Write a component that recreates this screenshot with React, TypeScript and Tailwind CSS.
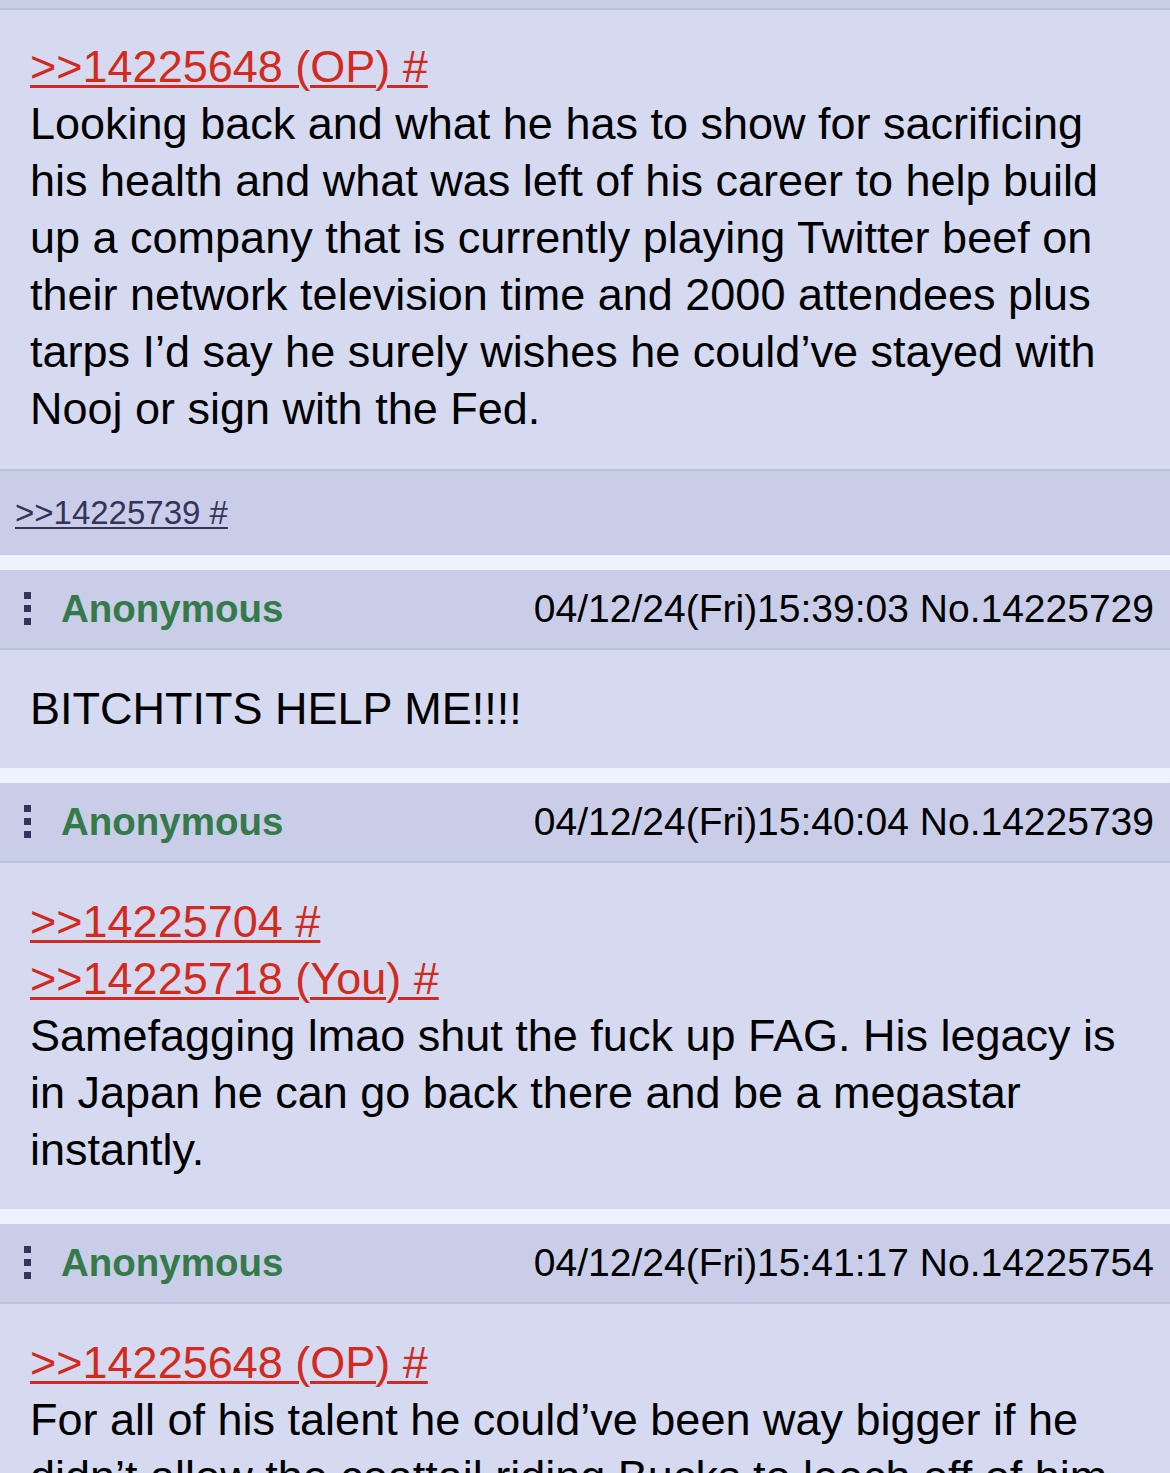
import React from 'react'

const font = { fontFamily: '"Liberation Sans", Arial, Helvetica, sans-serif' }

function Dots() {
  return (
    <svg width="8" height="34" viewBox="0 0 8 34" className="shrink-0">
      <rect x="0" y="0" width="7" height="7" fill="#34345c" />
      <rect x="0" y="13" width="7" height="7" fill="#34345c" />
      <rect x="0" y="26" width="7" height="7" fill="#34345c" />
    </svg>
  )
}

function PostHeader({ date, no }: { date: string; no: string }) {
  return (
    <div className="flex items-center h-[80px] bg-[#c9cde8] border-b-2 border-[#b7c5d9] pl-[24px] pr-[16px]">
      <Dots />
      <span className="ml-[29px] text-[38.5px] font-bold text-[#357a4a]">Anonymous</span>
      <span className="ml-auto text-[39px] text-black">
        {date} No.{no}
      </span>
    </div>
  )
}

function QuoteLink({ children }: { children: React.ReactNode }) {
  return (
    <div>
      <a className="text-[#d22a1e] underline decoration-[3px] underline-offset-[3px]">{children}</a>
    </div>
  )
}

function PostBody({ children }: { children: React.ReactNode }) {
  return (
    <div className="bg-[#d6daf0] pt-[30px] pb-[31px] pl-[30px] pr-[30px] text-[45px] leading-[57px] text-black">
      {children}
    </div>
  )
}

export default function App() {
  return (
    <main className="min-h-screen bg-[#eef2ff] overflow-hidden" style={font}>
      {/* tail of the OP post */}
      <div className="h-[10px] bg-[#c9cde8] border-b-2 border-[#b7c5d9]" />
      <div className="bg-[#d6daf0] pt-[28px] pb-[32px] pl-[30px] pr-[30px] text-[45px] leading-[57px] text-black border-b-2 border-[#b7c5d9]">
        <QuoteLink>&gt;&gt;14225648 (OP) #</QuoteLink>
        Looking back and what he has to show for sacrificing his health and what was left of his career to help build up a
        company that is currently playing Twitter beef on their network television time and 2000 attendees plus tarps I’d
        say he surely wishes he could’ve stayed with Nooj or sign with the Fed.
      </div>
      <div className="h-[84px] bg-[#c9cde8] flex items-center pl-[15px]">
        <a className="text-[33px] text-[#34345c] underline decoration-2 underline-offset-[3px]">&gt;&gt;14225739 #</a>
      </div>

      <div className="mt-[15px]">
        <PostHeader date="04/12/24(Fri)15:39:03" no="14225729" />
        <PostBody>BITCHTITS HELP ME!!!!</PostBody>
      </div>

      <div className="mt-[15px]">
        <PostHeader date="04/12/24(Fri)15:40:04" no="14225739" />
        <PostBody>
          <QuoteLink>&gt;&gt;14225704 #</QuoteLink>
          <QuoteLink>&gt;&gt;14225718 (You) #</QuoteLink>
          Samefagging lmao shut the fuck up FAG. His legacy is in Japan he can go back there and be a megastar instantly.
        </PostBody>
      </div>

      <div className="mt-[15px]">
        <PostHeader date="04/12/24(Fri)15:41:17" no="14225754" />
        <PostBody>
          <QuoteLink>&gt;&gt;14225648 (OP) #</QuoteLink>
          For all of his talent he could’ve been way bigger if he didn’t allow the coattail riding Bucks to leech off of him
          for so long.
        </PostBody>
      </div>
    </main>
  )
}
